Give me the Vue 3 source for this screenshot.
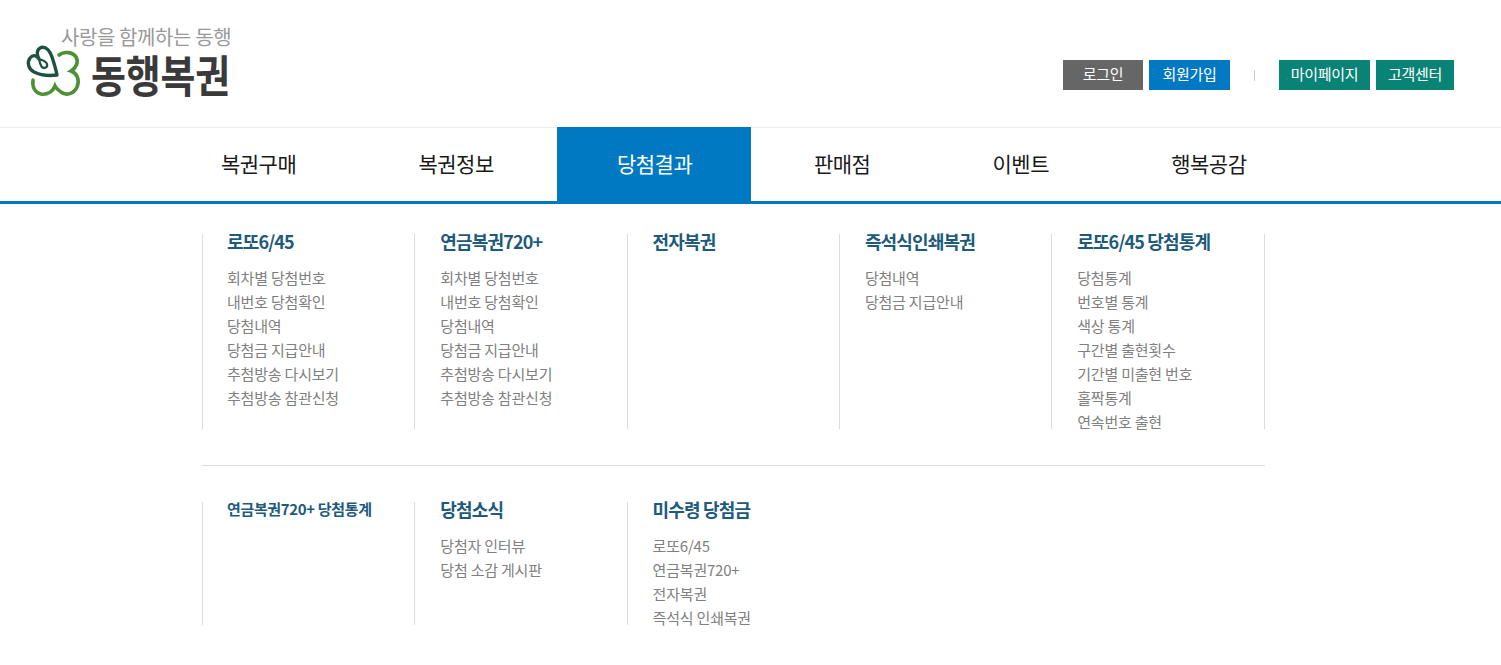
<script setup>
const navItems = ['복권구매', '복권정보', '당첨결과', '판매점', '이벤트', '행복공감']
const rows = [
  [
    { title: '로또6/45', links: ['회차별 당첨번호', '내번호 당첨확인', '당첨내역', '당첨금 지급안내', '추첨방송 다시보기', '추첨방송 참관신청'] },
    { title: '연금복권720+', links: ['회차별 당첨번호', '내번호 당첨확인', '당첨내역', '당첨금 지급안내', '추첨방송 다시보기', '추첨방송 참관신청'] },
    { title: '전자복권', links: [] },
    { title: '즉석식인쇄복권', links: ['당첨내역', '당첨금 지급안내'] },
    { title: '로또6/45 당첨통계', links: ['당첨통계', '번호별 통계', '색상 통계', '구간별 출현횟수', '기간별 미출현 번호', '홀짝통계', '연속번호 출현'] },
  ],
  [
    { title: '연금복권720+ 당첨통계', small: true, links: [] },
    { title: '당첨소식', links: ['당첨자 인터뷰', '당첨 소감 게시판'] },
    { title: '미수령 당첨금', links: ['로또6/45', '연금복권720+', '전자복권', '즉석식 인쇄복권'] },
  ],
]
</script>

<template>
  <div class="page">
    <header class="top">
      <a class="logo">
        <svg class="mark" viewBox="0 0 65 62" width="65" height="62" fill="none">
          <path d="M39 13C44 9 53 10 56 15C59 20 56 26 51 29C57 31 60 38 57 45C54 52 46 54 41 50C38 48 36 46 35 44C33 49 28 53 21 52C15 51 12 45 13 38" stroke="#4c9134" stroke-width="3.6" stroke-linecap="round"/>
          <path d="M37 33C29 34 20 33 14 30C8 27 7 20 10 16C13 12.500 16 13 19 17C16 12 17 7 21 5.500C26 4 30 9 32 15C34 21 36 28 37 33Z" stroke="#1d5142" stroke-width="3.4" stroke-linejoin="round"/>
          <path d="M19 17C21 18 26 18.500 27 22C28 26 23.500 27 21.500 24.500C20 22 19.500 19.500 19 17Z" stroke="#1d5142" stroke-width="2.2"/>
        </svg>
        <span class="logo-text">
          <span class="slogan">사랑을 함께하는 동행</span>
          <span class="brand">동행복권</span>
        </span>
      </a>
      <div class="util">
        <a class="btn gray">로그인</a>
        <a class="btn blue">회원가입</a>
        <i class="sep"></i>
        <a class="btn teal">마이페이지</a>
        <a class="btn teal">고객센터</a>
      </div>
    </header>
    <nav class="nav">
      <a v-for="n in navItems" :key="n" class="nav-item" :class="{ on: n === '당첨결과' }">{{ n }}</a>
    </nav>
    <section class="menu">
      <div v-for="(row, i) in rows" :key="i" class="row" :class="'row' + i">
        <div v-for="c in row" :key="c.title" class="col">
          <h3 :class="{ small: c.small }">{{ c.title }}</h3>
          <ul v-if="c.links.length">
            <li v-for="l in c.links" :key="l">{{ l }}</li>
          </ul>
        </div>
      </div>
    </section>
  </div>
</template>

<style>
html, body { background: #fff; }
</style>

<style scoped>
.page {
  width: 1501px;
  height: 665px;
  overflow: hidden;
  font-family: "Noto Sans CJK KR", "Noto Sans", sans-serif;
  background: #fff;
}
.top {
  height: 128px;
  box-sizing: border-box;
  border-bottom: 1px solid #ececec;
  display: flex;
  align-items: flex-start;
  justify-content: space-between;
  padding: 0 47px 0 20px;
}
.logo { display: flex; align-items: flex-start; padding-top: 24px; }
.mark { margin-top: 18px; }
.logo-text { display: flex; flex-direction: column; margin-left: -24px; }
.slogan {
  font-size: 20px;
  line-height: 26px;
  color: #999;
  letter-spacing: -0.4px;
  white-space: nowrap;
}
.brand {
  font-size: 38px;
  line-height: 38px;
  margin-top: 5px;
  font-weight: 700;
  color: #3a3a3a;
  letter-spacing: -0.2px;
  padding-left: 30px;
  white-space: nowrap;
  transform: scaleY(1.18);
  transform-origin: 0 50%;
}
.util {
  display: flex;
  align-items: center;
  margin-top: 60px;
}
.btn {
  height: 30px;
  line-height: 27px;
  font-size: 15px;
  color: #fff;
  text-align: center;
  box-sizing: border-box;
  letter-spacing: -0.3px;
}
.gray { width: 80px; background: #666; margin-right: 6px; }
.blue { width: 81px; background: #0079c2; }
.sep { width: 1px; height: 11px; background: #ccc; margin: 0 24px; }
.teal { background: #0a8377; }
.teal:nth-of-type(3) { width: 91px; margin-right: 6px; }
.teal:nth-of-type(4) { width: 78px; }
.nav {
  height: 77px;
  box-sizing: border-box;
  border-bottom: 3px solid #0079c2;
  margin-top: -1px;
  padding-left: 159.9px;
  display: flex;
}
.nav-item {
  padding: 0 61.1px;
  height: 75px;
  line-height: 73px;
  font-size: 21px;
  font-weight: 400;
  color: #1a1a1a;
  letter-spacing: -0.5px;
  white-space: nowrap;
}
.nav-item.on {
  background: #0079c2;
  color: #fff;
  margin: 0 1.9px 0 2.1px;
  padding: 0 58.7px 0 60px;
  height: 76px;
}
.menu {
  width: 1063px;
  margin-left: 202px;
  padding-top: 30px;
}
.row { display: flex; border-right: 1px solid #ddd; }
.row0 { height: 195px; }
.row1 {
  height: 123px;
  border-right: 0;
  margin-top: 36px;
  padding-top: 36px;
  border-top: 1px solid #ddd;
}
.col {
  width: 212.3px;
  box-sizing: border-box;
  border-left: 1px solid #ddd;
  padding-left: 25px;
}
.col:first-child { padding-left: 24px; }
h3 {
  margin: -2px 0 16px;
  font-size: 18px;
  line-height: 18px;
  font-weight: 700;
  color: #1d5a7c;
  letter-spacing: -0.85px;
  white-space: nowrap;
}
h3.small { font-size: 15px; letter-spacing: -0.35px; line-height: 14px; margin: 0; }
ul { margin: 0; padding: 0; list-style: none; }
li {
  font-size: 15px;
  line-height: 24px;
  color: #808080;
  letter-spacing: -0.2px;
  white-space: nowrap;
}
</style>
